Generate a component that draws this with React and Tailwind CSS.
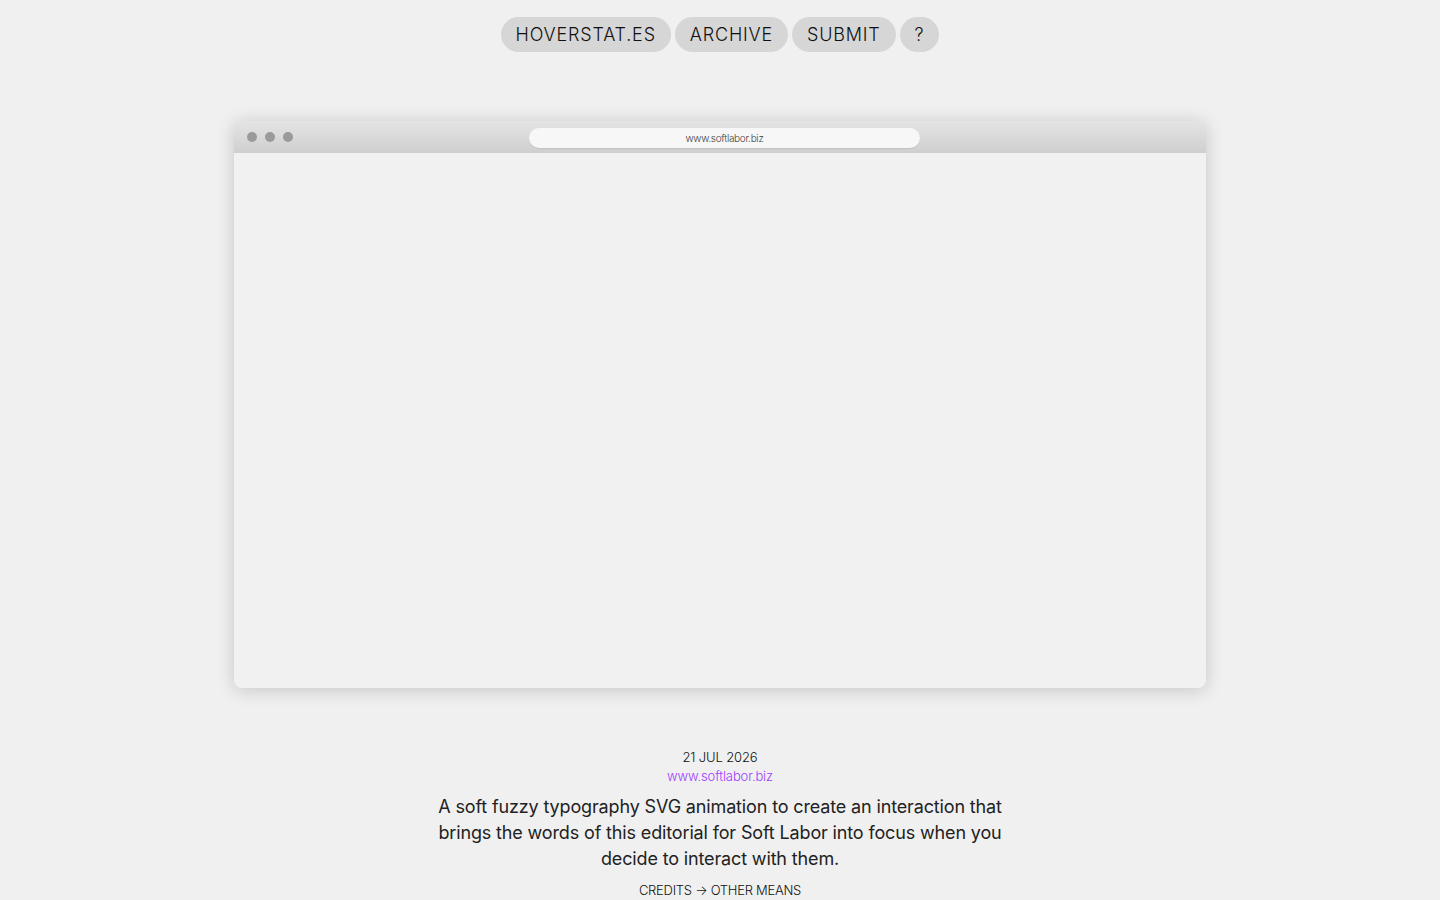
import React from "react";

export default function App() {
  const font = { fontFamily: "Inter, 'Liberation Sans', sans-serif" };
  return (
    <div className="min-h-[900px] w-full bg-[#f0f0f0] text-[#111]" style={font}>
      <nav className="flex justify-center gap-[4px] pt-[17px]">
        {["HOVERSTAT.ES", "ARCHIVE", "SUBMIT", "?"].map((t) => (
          <a
            key={t}
            className="flex h-[35px] items-center rounded-full bg-[#d6d6d6] px-[15px] text-[18px] font-light tracking-[0.045em] text-[#111]"
          >
            {t}
          </a>
        ))}
      </nav>

      <div className="mx-auto mt-[69px] w-[972px] overflow-hidden rounded-[8px] bg-[#f1f1f1] shadow-[0_2px_18px_rgba(0,0,0,0.18)]">
        <div className="relative flex h-[32px] items-center bg-gradient-to-b from-[#e4e4e4] to-[#cfcfcf] pl-[13px]">
          <div className="flex gap-[8px]">
            <span className="h-[10px] w-[10px] rounded-full bg-[#9a9a9a]" />
            <span className="h-[10px] w-[10px] rounded-full bg-[#9a9a9a]" />
            <span className="h-[10px] w-[10px] rounded-full bg-[#9a9a9a]" />
          </div>
          <div className="absolute left-[295px] top-[7px] flex h-[20px] w-[391px] items-center justify-center rounded-full bg-[#f7f7f7] text-[10px] font-light tracking-[-0.03em] text-[#444] shadow-[0_1px_1px_rgba(0,0,0,0.08)]">
            www.softlabor.biz
          </div>
        </div>
        <div className="h-[535px]" />
      </div>

      <div className="mt-[60px] flex flex-col items-center text-center">
        <div className="text-[13px] font-light leading-[18px] tracking-[-0.01em] text-[#111]">21 JUL 2026</div>
        <a className="text-[13px] font-light leading-[20px] tracking-[-0.01em] text-[#9b3cff]">www.softlabor.biz</a>
        <p className="mt-[8px] w-[580px] text-[18px] font-normal leading-[26px] tracking-[-0.008em] text-[#222]">
          A soft fuzzy typography SVG animation to create an interaction that brings the words of this editorial for Soft Labor into focus when you decide to interact with them.
        </p>
        <div className="mt-[9px] text-[13px] font-light leading-[18px] tracking-[-0.02em] text-[#111]">CREDITS → OTHER MEANS</div>
      </div>
    </div>
  );
}
